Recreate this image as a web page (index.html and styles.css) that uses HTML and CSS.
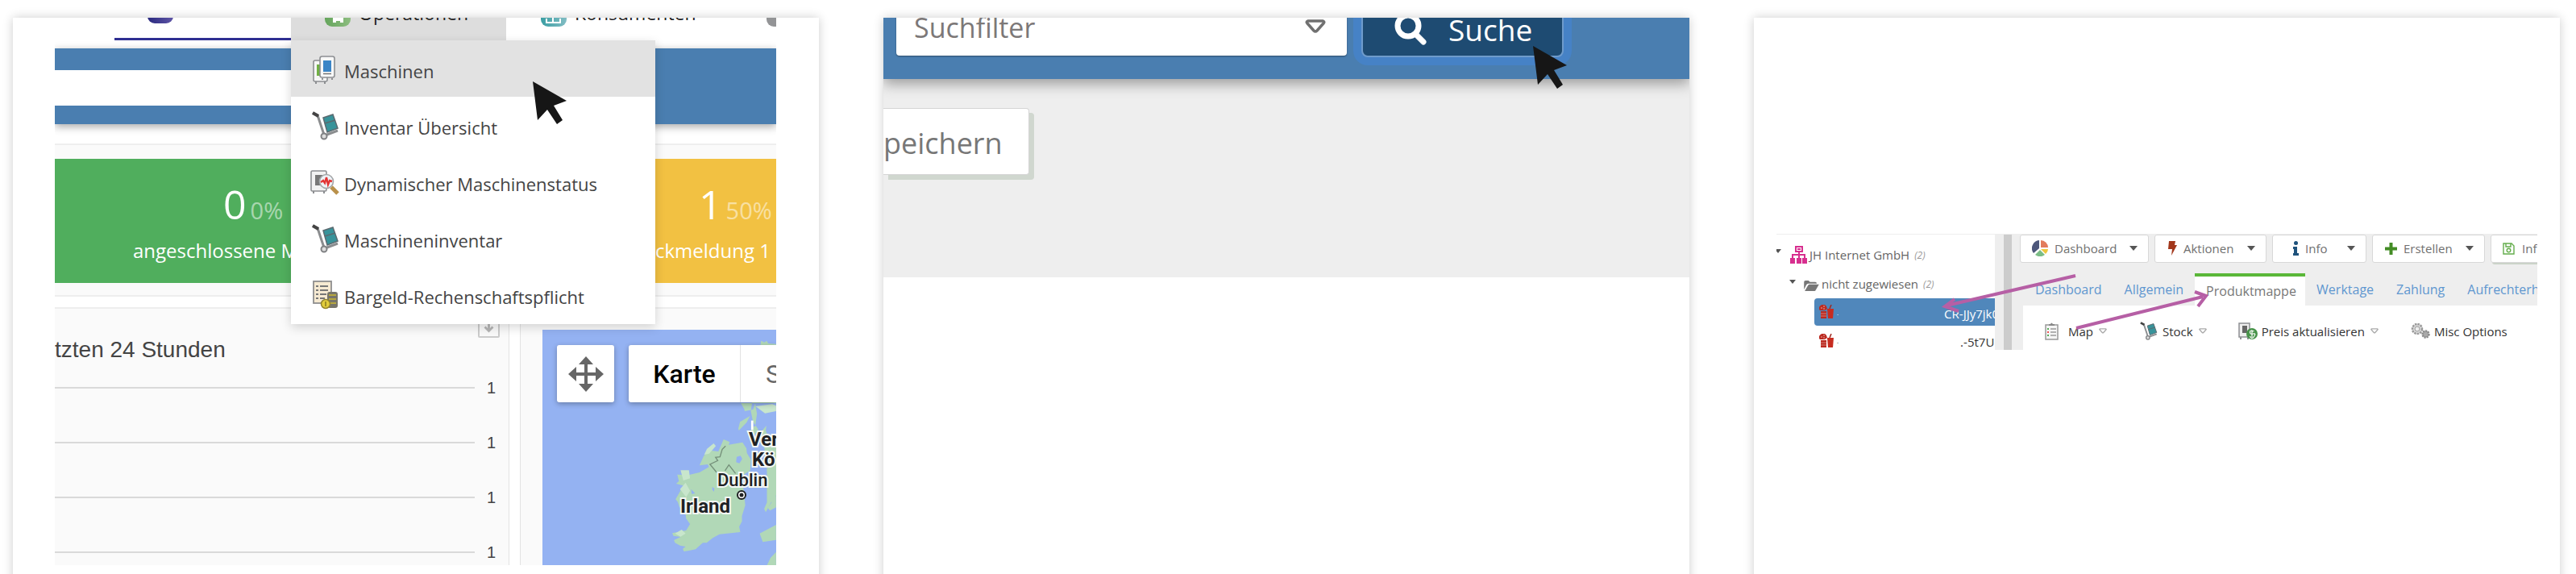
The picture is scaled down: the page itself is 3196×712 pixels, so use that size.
FILE: index.html
```html
<!DOCTYPE html>
<html lang="de">
<head>
<meta charset="utf-8">
<title>Maschinen</title>
<link rel="stylesheet" href="styles.css">
</head>
<body>
<svg class="defs" aria-hidden="true">
  <defs>
    <symbol id="cursor" viewBox="0 0 42 53"><path d="M0 0 42 24 26 30 37 48 30 53 18 35 6 48Z" fill="#161616"/></symbol>
    <symbol id="truck" viewBox="0 0 36 36">
      <path d="M3 2l6 3 8 24" fill="none" stroke="#8b8d8f" stroke-width="3"/>
      <path d="M3 2l7 4" stroke="#444" stroke-width="4"/>
      <path d="M18 30l16-6" stroke="#8b8d8f" stroke-width="3"/>
      <path d="M16 8l12-4 6 17-13 5z" fill="#38939a" stroke="#5b6a70" stroke-width="1.5"/>
      <path d="M18 15l13-4" stroke="#5b6a70" stroke-width="1.5"/>
      <circle cx="17" cy="31" r="3.5" fill="#ddd" stroke="#808284" stroke-width="2"/>
    </symbol>
    <symbol id="machines" viewBox="0 0 36 36">
      <rect x="4" y="7" width="17" height="26" rx="2" fill="#f6f6f6" stroke="#8d8f92" stroke-width="1.6"/>
      <path d="M8 12v14h6V12z" fill="#71b044"/>
      <path d="M7 33v3M18 33v3M15 29v2M27 29v2" stroke="#8d8f92" stroke-width="2"/>
      <rect x="12" y="2" width="18" height="26" rx="2.500" fill="#f8f8f8" stroke="#8d8f92" stroke-width="1.6"/>
      <rect x="16" y="7" width="10" height="14" fill="#3b85c6"/><path d="M16 23.500h10" stroke="#777" stroke-width="1.5"/>
    </symbol>
    <symbol id="status" viewBox="0 0 36 36">
      <rect x="1" y="4" width="19" height="25" rx="1.500" fill="#f2f2f2" stroke="#8d8f92" stroke-width="1.6"/>
      <path d="M6 9h9v13H6z" fill="#777"/><path d="M4 29v3M17 29v3" stroke="#8d8f92" stroke-width="2"/>
      <path d="M26 24l8 8" stroke="#b9914b" stroke-width="5"/>
      <circle cx="20" cy="17" r="8.500" fill="#eef4f8" stroke="#a4a6a8" stroke-width="1.6"/>
      <path d="M13 18l3-2 2 3 2-7 2 9 2-5 3 1" fill="none" stroke="#e33434" stroke-width="2.400"/>
    </symbol>
    <symbol id="cash" viewBox="0 0 36 36">
      <rect x="4" y="1" width="22" height="27" fill="#f6ead2" stroke="#8f8f8f" stroke-width="1.800"/>
      <path d="M7 7h3m2 0h10M7 12h3m2 0h10M7 17h3m2 0h8M7 22h3m2 0h6" stroke="#777" stroke-width="1.800"/>
      <rect x="21" y="14" width="13" height="20" rx="3" fill="#77756a"/>
      <path d="M23 18h9M23 23h9M23 28h9" stroke="#b7a83f" stroke-width="1.800"/>
      <circle cx="19" cy="29" r="5.500" fill="#e2cd3b" stroke="#94852f" stroke-width="1.5"/><path d="M19 26v6" stroke="#877a22" stroke-width="1.5"/>
    </symbol>
    <symbol id="food" viewBox="0 0 18 18">
      <path d="M0 6a5 5 0 0 1 9-4l1 3-3 2H1z" fill="#bb2a20"/>
      <path d="M2 4h2M5 2h2M5 5h2" stroke="#fff" stroke-opacity=".6"/>
      <path d="M2 8h7v9H2z" fill="#bb2a20"/><path d="M2 11h7M2 14h7" stroke="#fff" stroke-opacity=".4"/>
      <path d="M10 5h8l-1 12h-6z" fill="#c72c20"/><path d="M13 5l2-5" stroke="#a0281e" stroke-width="1.5"/>
    </symbol>
    <symbol id="outline-down" viewBox="0 0 26 18"><path d="M4 2h18q3 1 1 3l-8 9q-2 2-4 0L3 5q-2-2 1-3z" fill="none" stroke="currentColor" stroke-width="3.500"/></symbol>
    <symbol id="down" viewBox="0 0 10 6"><path d="M0 0h10L5 6z" fill="currentColor"/></symbol>
  </defs>
</svg>

<main class="steps">
  <article class="card card-menu">
    <section class="shot dash">
      <nav class="topnav">
        <a class="current" href="#" aria-label="Start"><span class="app purple"></span></a>
        <a class="open" href="#"><span class="app green"><svg viewBox="0 0 32 32"><path d="M10 20v7h4v-2h5v2h4v-7z" fill="#fff"/></svg></span>Operationen</a>
        <a class="plain" href="#"><span class="app teal"><svg viewBox="0 0 32 32"><path d="M7 22v5h17v-5M15 20v7" fill="none" stroke="#fff" stroke-width="2"/></svg></span>Konsumenten</a>
        <a class="more" href="#" aria-label="Mehr"><span class="app gray"></span></a>
      </nav>
      <div class="bluebar"><div class="blank"></div></div>
      <div class="tiles">
        <div class="tile ok"><p class="num">0 <small>0%</small></p><p class="lbl">angeschlossene M</p></div>
        <div class="tile warn"><p class="num">1 <small>50%</small></p><p class="lbl">ckmeldung 1</p></div>
      </div>
      <div class="lower">
        <div class="chart">
          <div class="chart-head"><h2>tzten 24 Stunden</h2>
            <button class="dl" aria-label="Herunterladen"><svg viewBox="0 0 24 24"><path d="M12 2v17M5 12l7 7 7-7" fill="none" stroke="#b5b5b5" stroke-width="4"/></svg></button></div>
          <ul class="grid">
            <li><i></i>1</li><li><i></i>1</li><li><i></i>1</li><li><i></i>1</li>
          </ul>
        </div>
        <div class="mapbox">
          <div class="map">
            <svg class="land" viewBox="0 0 290 293" preserveAspectRatio="xMinYMin slice">
              <g transform="translate(-173 -59) scale(.3444 .3333)" fill="#b1d8b7">
                <path d="M1290 218l12 6 8-6 6 10 28 2v220h-127l12 22 2 8 30-6 8-24 6 40-6 46-10 2-10 22 4 18 14-12 12-18 10 10 20-24-2 18 10 30 30 8v200l-14 16-20 38-6 12-6-12 10-24V680l-16-110-34-50-8-40z"/>
                <path d="M1155 585l22 10-4 10 50-9 14 22 2 18 14 24-2 40-28 20-10 20 14 30 6 60-12 40v20l-10 20 4 20-75 8-24 14-22 18-14 0-26 24-20 4-22 4-4-10 10-8-20-4-18-10-4-10 24-12-26-4-4-10 50-10 14-24-14-20-4-32-20-10-6-20-8-10 22-40 10-10-30-8 10-10-6-24 40 2 40-10 34-20-4-10-30 4 16-36 10-10 12-10 30 4z"/>
                <path d="M1318 790l20-4 6 12v40l-22 12-8-10 14-20zM1285 935l59-32v56l-48 8zM1310 1056l14-30 20-22v52zM1208 545l6-25 36-22-12 24-28 30zM1310 700l20-20 10 4-18 30z"/>
                <path d="M1270 462l60-8 14 6v20l-40 8zM1095 620l24-20 8 10-24 28-18 4zM1000 700h30l4 30-24 8zM998 770l20-24 16 30-14 24zM980 935l24-14 14 14-18 12z" fill="#c8e6cc"/>
                <path d="M1202 650l14-4 6 12-10 16-12-4zM1114 762l8 6-2 12-6-8zM1038 770l14 16-12 2z" fill="#94b2f2"/>
                <path d="M1162 610l-12 12-8 28-16 2 8 12-28 14 24 30M1160 702l14-22 24 32" fill="none" stroke="#76917b" stroke-width="4"/>
                <path d="M1254 515h8v35h-8z" fill="#fff"/>
              </g>
              <circle cx="247" cy="205" r="5" fill="#fff" stroke="#202124" stroke-width="2"/><circle cx="247" cy="205" r="2.500" fill="#202124"/>
              <g class="places"><text x="256" y="144" class="country">Ver</text><text x="260" y="169" class="country">Kö</text><text x="217" y="194">Dublin</text><text x="171" y="227" class="country">Irland</text></g>
            </svg>
            <div class="mapctl">
              <button class="move" aria-label="Bewegen"><svg viewBox="0 0 44 44"><path d="M22 0l9 10h-7v10h10v-7l10 9-10 9v-7H24v10h7l-9 10-9-10h7V24H10v7L0 22l10-9v7h10V10h-7z" fill="#666"/></svg></button>
              <div class="types"><button class="on">Karte</button><button class="sat">S</button></div>
            </div>
          </div>
        </div>
      </div>
      <ul class="menu">
        <li class="hover"><svg><use href="#machines"/></svg><a href="#">Maschinen</a></li>
        <li><svg><use href="#truck"/></svg><a href="#">Inventar Übersicht</a></li>
        <li><svg><use href="#status"/></svg><a href="#">Dynamischer Maschinenstatus</a></li>
        <li><svg><use href="#truck"/></svg><a href="#">Maschineninventar</a></li>
        <li><svg><use href="#cash"/></svg><a href="#">Bargeld-Rechenschaftspflicht</a></li>
      </ul>
      <svg class="pointer at-menu"><use href="#cursor"/></svg>
    </section>
  </article>

  <article class="card card-search">
    <section class="search">
      <div class="searchbar">
        <div class="filter"><input type="text" placeholder="Suchfilter" aria-label="Suchfilter"><svg><use href="#outline-down"/></svg></div>
        <button class="go"><svg viewBox="0 0 40 44"><circle cx="17" cy="20" r="13" fill="none" stroke="#fff" stroke-width="7"/><path d="M26 30l10 10" stroke="#fff" stroke-width="7" stroke-linecap="round"/></svg>Suche</button>
      </div>
      <div class="body"><button class="save">peichern</button></div>
      <svg class="pointer at-search"><use href="#cursor"/></svg>
    </section>
  </article>

  <article class="card card-tabs">
    <section class="shot app-view">
      <ul class="tree">
        <li class="l0"><svg class="caret"><use href="#down"/></svg><svg class="org" viewBox="0 0 21 22"><path d="M7 1h8v6H7zM11 7v8M3 15v-4h15v4" fill="none" stroke="#d72f8f" stroke-width="2"/><path d="M9 3h4v2H9zM0 15h6v7H0zM8 15h6v7H8zM15 15h6v7h-6z" fill="#d72f8f"/></svg>JH Internet GmbH <em>(2)</em></li>
        <li class="l1"><svg class="caret"><use href="#down"/></svg><svg class="folder" viewBox="0 0 20 14"><path d="M0 12V2q0-2 2-2h4l2 2h7q2 0 2 2H6Q4 4 3 6zM1 14l4-7q1-2 2-2h13l-4 7q-1 2-2 2z" fill="#777"/></svg>nicht zugewiesen <em>(2)</em></li>
        <li class="leaf sel"><svg><use href="#food"/></svg><b>.</b><span>CR-JJy7jk0</span></li>
        <li class="leaf"><svg><use href="#food"/></svg><b>.</b><span>.-5t7U</span></li>
      </ul>
      <div class="split"></div>
      <div class="work">
        <div class="actions">
          <button class="a1"><svg class="ico" viewBox="0 0 20 20"><path d="M9 10V0A10 10 0 0 0 2 16z" fill="#4d577b"/><path d="M11 9V0a9 9 0 0 1 9 9z" fill="#e27b5c"/><path d="M11 11h9q0 3-3 6z" fill="#eec63d"/><path d="M10 12l6 6a10 10 0 0 1-12 0z" fill="#7bbd86"/></svg>Dashboard<svg class="caret"><use href="#down"/></svg></button>
          <button class="a2"><svg class="ico" viewBox="0 0 11 18"><path d="M1 0h8L8 5h3L4 18l1-8H0z" fill="#a2371b"/></svg>Aktionen<svg class="caret"><use href="#down"/></svg></button>
          <button class="a3"><svg class="ico" viewBox="0 0 7 18"><circle cx="3.500" cy="2.500" r="2.500" fill="#1f527c"/><path d="M0 7h5v8h2v3H0v-3h1v-5H0z" fill="#1f527c"/></svg>Info<svg class="caret"><use href="#down"/></svg></button>
          <button class="a4"><svg class="ico" viewBox="0 0 15 15"><path d="M7.500 0v15M0 7.500h15" stroke="#438c25" stroke-width="4"/></svg>Erstellen<svg class="caret"><use href="#down"/></svg></button>
          <button class="a5"><svg class="ico" viewBox="0 0 15 15"><path d="M1 1h10l3 3v10H1zM4 1v4h6V1" fill="none" stroke="#64ad4c" stroke-width="1.400"/><circle cx="7.500" cy="9.500" r="2.300" fill="none" stroke="#64ad4c" stroke-width="1.400"/></svg>Inf</button>
        </div>
        <nav class="tabs"><a href="#">Dashboard</a><a href="#">Allgemein</a><a href="#" class="active">Produktmappe</a><a href="#">Werktage</a><a href="#">Zahlung</a><a href="#">Aufrechterh</a></nav>
        <div class="tools">
          <button class="t1"><svg class="ico" viewBox="0 0 17 22"><rect x="1" y="3" width="15" height="18" fill="#f5f5f5" stroke="#999" stroke-width="1.500"/><path d="M5 4V2h2q1-3 3 0h2v2z" fill="#888"/><path d="M3 8h2" stroke="#5a5" stroke-width="2"/><path d="M3 12h2" stroke="#e55" stroke-width="2"/><path d="M3 16h2" stroke="#5a5" stroke-width="2"/><path d="M7 8h7M7 12h7M7 16h7" stroke="#999" stroke-width="1.300"/></svg>Map<svg class="tri"><use href="#outline-down"/></svg></button>
          <button class="t2"><svg class="ico"><use href="#truck"/></svg>Stock<svg class="tri"><use href="#outline-down"/></svg></button>
          <button class="t3"><svg class="ico" viewBox="0 0 24 22"><rect x="1" y="1" width="13" height="17" fill="#eee" stroke="#8d8f92" stroke-width="1.500"/><path d="M5 4h6v9H5z" fill="#666"/><path d="M3 18v3M12 18v3" stroke="#8d8f92" stroke-width="2"/><circle cx="17" cy="14" r="7" fill="#48934a"/><path d="M19.500 11q-5-2-5 1t4 2 1 3.500-5-.5M17 9.500v9" fill="none" stroke="#fff" stroke-width="1.200"/></svg>Preis aktualisieren<svg class="tri"><use href="#outline-down"/></svg></button>
          <button class="t4"><svg class="ico" viewBox="0 0 24 20"><circle cx="8" cy="7" r="6" fill="#ddd" stroke="#999" stroke-width="2.500" stroke-dasharray="2.500 1"/><circle cx="8" cy="7" r="3" fill="#eee" stroke="#999"/><circle cx="18.500" cy="13.500" r="4" fill="#aaa" stroke="#888" stroke-width="2.500" stroke-dasharray="2 1"/></svg>Misc Options</button>
        </div>
      </div>
      <svg class="arrows" viewBox="0 0 944 144" preserveAspectRatio="xMinYMin"><path d="M371 52L211 89M221 81l-12 9 17 6M372 117L529 78M519 72l14 5-10 13" fill="none" stroke="#b65fa5" stroke-width="4"/></svg>
    </section>
  </article>
</main>
</body>
</html>
```
FILE: styles.css
```css
* { box-sizing: border-box; }
body { margin: 0; height: 100vh; overflow: hidden; background: #fff; font-family: "Open Sans", "Noto Sans", sans-serif; color: #444; }
button, input { font: inherit; color: inherit; border: 0; background: none; padding: 0; }
a { color: inherit; text-decoration: none; }
ul { list-style: none; margin: 0; padding: 0; }
p, h2 { margin: 0; font-weight: 400; }
svg { display: block; flex: none; }
.defs { position: absolute; width: 0; height: 0; }

.steps { display: grid; grid-template-columns: repeat(3, minmax(0, 1fr)); gap: 80px; padding: 22px 20px 0 16px; }
.card { min-height: 100vh; background: #fff; box-shadow: 0 0 12px rgba(0, 0, 0, .2); overflow: hidden; }
.shot { position: relative; overflow: hidden; }
.pointer { position: absolute; width: 42px; height: 53px; }

/* dashboard with open menu */
.card-menu { padding: 0 53px 0 52px; }
.topnav { display: flex; height: 56px; margin-top: -28px; font-size: 23px; line-height: 30px; color: #222; white-space: nowrap; }
.topnav a { display: flex; flex: none; padding-top: 7px; gap: 10px; }
.app { display: block; width: 32px; height: 32px; border-radius: 9px; flex: none; }
.topnav .current { width: 219px; margin-left: 74px; padding: 3px 0 0 41px; border-bottom: 3px solid #2f2f92; }
.topnav .open { width: 267px; padding-left: 42px; background: #ddd; }
.topnav .plain { width: 323px; padding-left: 43px; }
.purple { background: linear-gradient(90deg, #29297f, #5f55a6); }
.green { background: linear-gradient(90deg, #65a55c, #8dbd80); }
.teal { background: linear-gradient(90deg, #3b9ea3, #82bdc4); }
.gray { background: #939496; }
.bluebar { margin-top: 10px; padding: 27px 0 23px; background: #4a7eb0; box-shadow: 0 3px 10px rgba(0, 0, 0, .35); }
.blank { width: 60%; height: 44px; background: #fff; }
.tiles { display: grid; grid-template-columns: 293px 1fr; column-gap: 452px; margin-top: 24px; padding: 17px 0 15px; background: #fafafa; border-top: 2px solid #eee; border-bottom: 2px solid #eee; }
.tile { height: 154px; padding-top: 26px; color: #fff; overflow: hidden; white-space: nowrap; }
.tile .num { font-size: 50px; line-height: 60px; }
.tile small { font-size: 29px; opacity: .5; margin-left: -8px; }
.tile .lbl { margin-top: 4px; font-size: 24px; line-height: 32px; }
.ok { background: #50ae5d; }
.ok .num { padding-left: 209px; }
.ok .lbl { padding-left: 97px; }
.warn { background: #f2c142; }
.warn .num { padding-left: 54px; }
.lower { display: grid; grid-template-columns: 564px 1fr; column-gap: 13px; height: 320px; margin-top: 13px; }
.chart, .mapbox { background: #fafafa; border-top: 2px solid #eee; }
.chart { border-right: 1px solid #e3e3e3; }
.chart-head { display: flex; justify-content: space-between; height: 64px; padding-right: 11px; }
.chart h2 { padding-top: 33px; font: 28px/36px "Liberation Sans", sans-serif; color: #444; }
.dl { width: 27px; height: 27px; margin-top: 9px; padding: 0 3px; border: 2px solid #ccc; border-radius: 2px; }
.grid { font: 20px/68px "Liberation Sans", sans-serif; }
.grid li { display: flex; align-items: center; gap: 15px; height: 68px; padding-right: 16px; }
.grid i { flex: 1; height: 2px; background: #d9d9d9; }
.mapbox { padding: 26px 0 0 27px; border-left: 1px solid #e3e3e3; }
.map { position: relative; height: 292px; background: #94b2f2; overflow: hidden; }
.land { width: 100%; height: 100%; }
.places { font: 500 22px Roboto, sans-serif; fill: #202124; stroke: #f4f8f4; stroke-width: 4px; paint-order: stroke; }
.country { font-size: 24px; font-weight: 700; }
.mapctl { position: absolute; top: 19px; left: 18px; right: 0; display: flex; gap: 18px; }
.move { display: grid; place-items: center; flex: none; width: 71px; height: 71px; background: #fff; border-radius: 3px; box-shadow: 0 2px 6px rgba(0, 0, 0, .3); }
.move svg { width: 44px; height: 44px; }
.types { display: flex; flex: 1; height: 71px; background: #fff; border-radius: 3px 0 0 3px; box-shadow: 0 2px 6px rgba(0, 0, 0, .3); overflow: hidden; font: 32px Roboto, sans-serif; }
.types .on { width: 139px; flex: none; color: #000; font-weight: 500; border-right: 1px solid #e2e2e2; }
.types .sat { padding-left: 31px; color: #666; }
.menu { position: absolute; top: 28px; left: 293px; width: 452px; padding-bottom: 2px; background: #fff; box-shadow: 0 4px 12px rgba(0, 0, 0, .16); font-size: 22px; color: #444; }
.menu li { display: flex; align-items: center; gap: 6px; height: 70px; padding: 2px 0 0 24px; }
.menu li.hover { background: #e2e2e2; }
.menu svg { width: 36px; height: 36px; }
.menu a { padding-top: 3px; }
.at-menu { top: 79px; left: 593px; }

/* search bar */
.search { position: relative; }
.searchbar { position: relative; display: flex; gap: 18px; height: 96px; margin-top: -20px; padding: 0 156px 27px 16px; background: #4a7eb0; box-shadow: 0 6px 16px rgba(0, 0, 0, .35); }
.filter { display: flex; flex: 1; min-width: 0; height: 67px; padding: 0 26px 0 22px; background: #fff; border-radius: 0 0 4px 4px; box-shadow: 0 1px 2px rgba(0, 0, 0, .4); color: #707070; }
.filter input { flex: 1; min-width: 0; height: 50px; margin-top: 7px; font-size: 34px; }
.filter input::placeholder { color: #7c7878; opacity: 1; }
.filter svg { width: 26px; height: 18px; margin-top: 22px; }
.go { display: flex; gap: 27px; width: 251px; height: 69px; padding: 8px 0 0 39px; background: #1e4b72; border: 2px solid #6f9bcb; border-radius: 8px; box-shadow: 0 0 0 10px #4682c6; color: #fff; font-size: 37px; line-height: 50px; }
.go svg { width: 40px; height: 44px; }
.body { padding: 36px 0 127px; background: #eee; }
.save { display: block; width: 181px; height: 83px; padding-top: 4px; background: #fff; border: 1px solid #d5d5d5; border-left: 0; border-radius: 0 4px 4px 0; box-shadow: 6px 6px 0 #d0d7cf; font-size: 36px; line-height: 77px; text-align: left; color: #777; }
.at-search { top: 55px; left: 806px; }

/* tree and tabs */
.card-tabs { padding: 268px 28px 0; }
.app-view { display: grid; grid-template-columns: 271px 21px 1fr; height: 144px; font-size: 15px; color: #666; white-space: nowrap; border-top: 1px solid #eee; }
.tree { overflow: hidden; }
.tree li { display: flex; align-items: center; }
.tree em { margin-left: 6px; font-size: 12px; color: #999; }
.caret { width: 10px; height: 6px; color: #555; }
.tree .caret { width: 8px; height: 5px; }
.l0 { height: 38px; padding: 12px 0 0; gap: 0; }
.l0 .caret { margin: 0 11px 9px -2px; }
.org { width: 21px; height: 22px; margin-right: 3px; }
.l1 { height: 41px; padding: 0 0 3px 16px; margin-top: 4px; }
.l1 .caret { margin: 0 10px 6px 0; }
.folder { width: 19px; height: 13px; margin: 4px 3px 0 0; }
.tree .leaf { height: 34px; margin: -4px 0 4px 47px; padding-left: 6px; color: #333; border-radius: 4px 0 0 4px; }
.leaf svg { width: 18px; height: 18px; }
.leaf b { margin-left: 4px; font-size: 8px; font-weight: 400; }
.leaf span { margin-left: 151px; padding-top: 3px; }
.tree .leaf + .leaf { padding-top: 3px; }
.tree .sel { background: #5087bb; color: #fff; }
.sel span { margin-left: 131px; }
.split { background: #ccc; border-left: 11px solid #eee; }
.work { background: #eee; overflow: hidden; }
.actions { display: flex; gap: 7px; padding-left: 10px; }
.actions button { display: flex; align-items: center; flex: none; height: 35px; padding: 0 13px 1px 14px; background: #fff; border: 1px solid #d8d8d8; border-radius: 3px; color: #707070; }
.actions .caret { margin-left: auto; }
.a1 { width: 160px; } .a1 .ico { width: 20px; height: 20px; margin-right: 8px; }
.a2 { width: 139px; } .a2 .ico { width: 11px; height: 18px; margin: 0 8px 0 2px; }
.a3 { width: 117px; } .a3 .ico { width: 7px; height: 18px; margin: 0 8px 0 11px; }
.a4 { width: 140px; } .a4 .ico { width: 15px; height: 15px; margin: 0 8px 0 1px; }
.a5 { width: 90px; } .a5 .ico { width: 15px; height: 15px; margin-right: 9px; }
.actions .a5 { box-shadow: 2px 2px 0 #cbd3c8; }
.tabs { display: flex; height: 40px; margin-top: 13px; padding-left: 15px; color: #5f97d0; font-size: 16px; line-height: 40px; }
.tabs a { padding: 0 14px; }
.tabs .active { width: 137px; background: #fff; border-top: 4px solid #5ab738; line-height: 36px; color: #777; }
.tools { display: flex; align-items: center; height: 56px; margin-left: 14px; padding: 7px 0 0 27px; background: #fff; color: #333; }
.tools button { display: flex; align-items: center; flex: none; }
.tri { width: 10px; height: 7px; margin-left: 7px; color: #aaa; }
.t1 .ico { width: 17px; height: 22px; margin-right: 12px; }
.t2 { margin-left: 40px; } .t2 .ico { width: 23px; height: 23px; margin-right: 6px; }
.t3 { margin-left: 39px; } .t3 .ico { width: 24px; height: 22px; margin-right: 5px; }
.t4 { margin-left: 40px; } .t4 .ico { width: 24px; height: 20px; margin-right: 5px; }
.arrows { position: absolute; top: -1px; left: 0; width: 944px; height: 144px; }
```
